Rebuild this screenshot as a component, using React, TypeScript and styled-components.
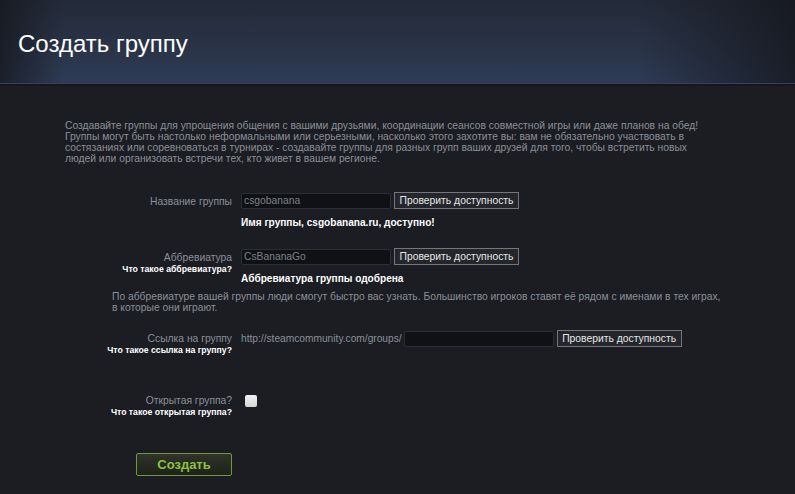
import React from "react";
import styled, { createGlobalStyle } from "styled-components";

const GlobalStyle = createGlobalStyle`
  html, body { margin: 0; padding: 0; }
  body {
    background: #1b1d23;
    font-family: Arial, "Liberation Sans", Helvetica, sans-serif;
    width: 795px;
    height: 494px;
    overflow: hidden;
  }
`;

const Header = styled.header`
  height: 84px;
  border-bottom: 2px solid #15171c;
  background:
    linear-gradient(90deg, rgba(20,22,28,0.75) 0%, rgba(20,22,28,0) 8%, rgba(20,22,28,0) 80%, rgba(20,22,28,0.8) 100%),
    linear-gradient(180deg, #232a38 0%, #2a3448 60%, #2e3c57 100%);
  display: flex;
  align-items: center;
  box-shadow: inset 0 -1px 0 #34415a;
`;

const Title = styled.h1`
  margin: 0 0 0 18px;
  padding-top: 3px;
  font-family: Arial, "Liberation Sans", sans-serif;
  font-weight: normal;
  font-size: 24px;
  color: #ffffff;
`;

const Content = styled.main`
  padding: 34px 0 0 65px;
`;

const Intro = styled.p`
  margin: 0;
  width: 640px;
  font-size: 10.3px;
  line-height: 11px;
  color: #8b8f96;
`;

const Row = styled.div<{ $top: number }>`
  display: grid;
  grid-template-columns: 167px 1fr;
  column-gap: 9px;
  margin-top: ${(p) => p.$top}px;
`;

const LabelCell = styled.div<{ $pad: number }>`
  text-align: right;
  padding-top: ${(p) => p.$pad}px;
`;

const Label = styled.div`
  font-size: 10.3px;
  line-height: 12px;
  color: #8b8f96;
`;

const SubLabel = styled.div`
  font-size: 8.7px;
  line-height: 11px;
  font-weight: bold;
  color: #ffffff;
`;

const FieldCell = styled.div`
  display: flex;
  flex-direction: column;
`;

const FieldLine = styled.div`
  display: flex;
  align-items: center;
  gap: 3px;
`;

const Input = styled.input`
  box-sizing: border-box;
  width: 150px;
  height: 16px;
  padding: 0 2px;
  background: #0f1115;
  border: 1px solid #2b2e35;
  border-radius: 2px;
  font-family: Arial, "Liberation Sans", sans-serif;
  font-size: 10.3px;
  color: #7d8188;
  outline: none;
`;

const CheckButton = styled.button`
  box-sizing: border-box;
  height: 17px;
  width: 125px;
  padding: 0;
  background: #24262b;
  border: 1px solid #74767a;
  font-family: Arial, "Liberation Sans", sans-serif;
  font-size: 10.35px;
  color: #e6e6e6;
  cursor: pointer;
`;

const Message = styled.div`
  margin-top: 8px;
  font-size: 10.1px;
  line-height: 12px;
  font-weight: bold;
  color: #ffffff;
`;

const UrlPrefix = styled.span`
  font-size: 10.2px;
  color: #8b8f96;
  margin-right: -1px;
`;

const Explain = styled.p`
  margin: 6px 0 0 47px;
  width: 612px;
  font-size: 10.3px;
  line-height: 11px;
  color: #8b8f96;
`;

const Checkbox = styled.span`
  display: inline-block;
  width: 12px;
  height: 12px;
  margin: 0 0 0 4px;
  border-radius: 2px;
  background: linear-gradient(180deg, #f2f2f2, #d6d6d6);
`;

const CreateButton = styled.button`
  box-sizing: border-box;
  margin: 35px 0 0 71px;
  width: 96px;
  height: 23px;
  padding: 0;
  border: 1px solid #6f9a33;
  border-radius: 2px;
  background: linear-gradient(180deg, #2f3328 0%, #1f211c 100%);
  font-family: Arial, "Liberation Sans", sans-serif;
  font-size: 13px;
  font-weight: bold;
  color: #8cc13f;
  cursor: pointer;
`;

export default function App() {
  return (
    <>
      <GlobalStyle />
      <Header>
        <Title>Создать группу</Title>
      </Header>
      <Content>
        <Intro>
          Создавайте группы для упрощения общения с вашими друзьями, координации сеансов совместной игры или даже планов на обед! Группы могут быть настолько неформальными или серьезными, насколько этого захотите вы: вам не обязательно участвовать в состязаниях или соревноваться в турнирах - создавайте группы для разных групп ваших друзей для того, чтобы встретить новых людей или организовать встречи тех, кто живет в вашем регионе.
        </Intro>

        <Row $top={28}>
          <LabelCell $pad={4}>
            <Label>Название группы</Label>
          </LabelCell>
          <FieldCell>
            <FieldLine>
              <Input defaultValue="csgobanana" />
              <CheckButton>Проверить доступность</CheckButton>
            </FieldLine>
            <Message>Имя группы, csgobanana.ru, доступно!</Message>
          </FieldCell>
        </Row>

        <Row $top={19}>
          <LabelCell $pad={4}>
            <Label>Аббревиатура</Label>
            <SubLabel>Что такое аббревиатура?</SubLabel>
          </LabelCell>
          <FieldCell>
            <FieldLine>
              <Input defaultValue="CsBananaGo" />
              <CheckButton>Проверить доступность</CheckButton>
            </FieldLine>
            <Message>Аббревиатура группы одобрена</Message>
          </FieldCell>
        </Row>

        <Explain>
          По аббревиатуре вашей группы люди смогут быстро вас узнать. Большинство игроков ставят её рядом с именами в тех играх, в которые они играют.
        </Explain>

        <Row $top={17}>
          <LabelCell $pad={3}>
            <Label>Ссылка на группу</Label>
            <SubLabel>Что такое ссылка на группу?</SubLabel>
          </LabelCell>
          <FieldCell>
            <FieldLine>
              <UrlPrefix>http://steamcommunity.com/groups/</UrlPrefix>
              <Input />
              <CheckButton>Проверить доступность</CheckButton>
            </FieldLine>
          </FieldCell>
        </Row>

        <Row $top={39}>
          <LabelCell $pad={0}>
            <Label>Открытая группа?</Label>
            <SubLabel>Что такое открытая группа?</SubLabel>
          </LabelCell>
          <FieldCell>
            <FieldLine>
              <Checkbox />
            </FieldLine>
          </FieldCell>
        </Row>

        <CreateButton>Создать</CreateButton>
      </Content>
    </>
  );
}
